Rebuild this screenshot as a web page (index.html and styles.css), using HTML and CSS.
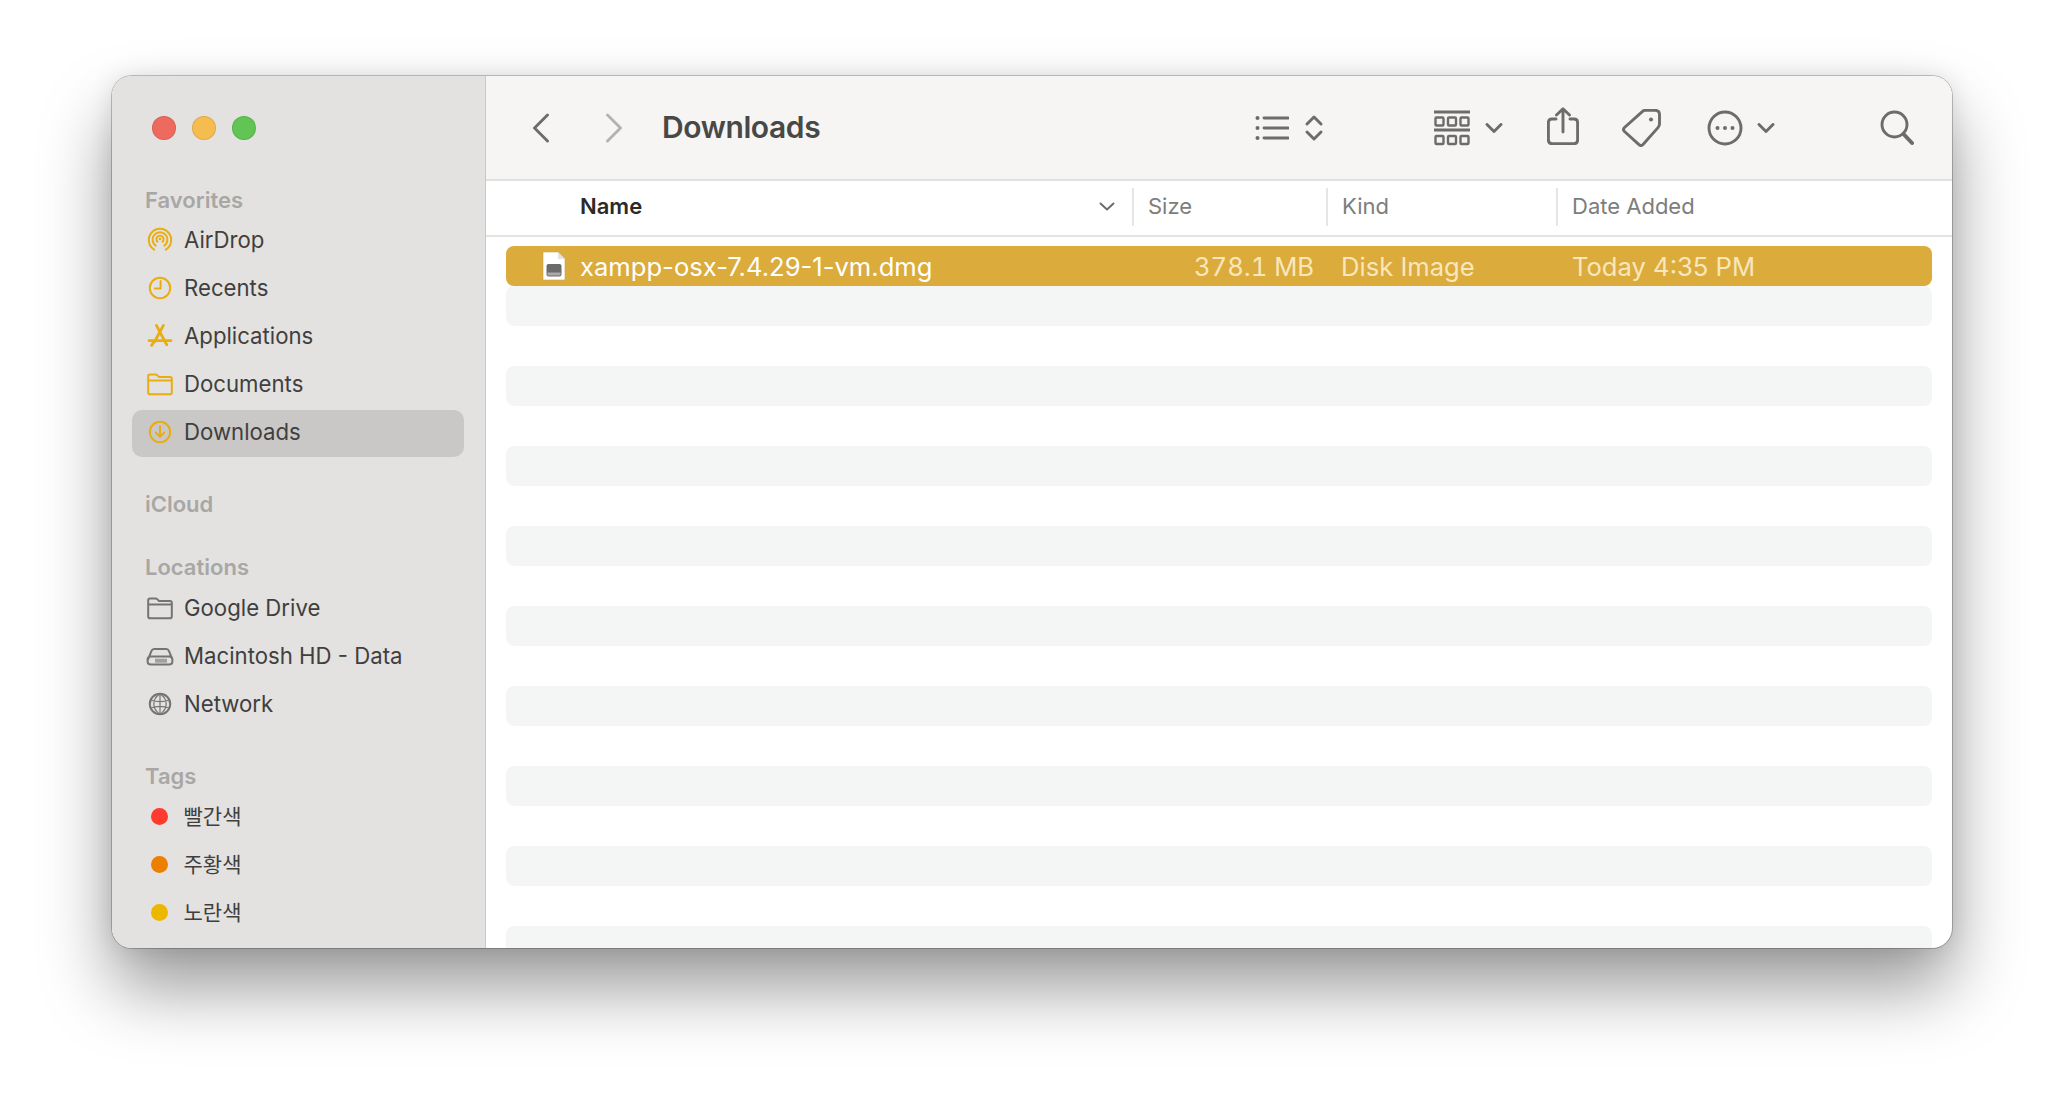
FILE: index.html
```html
<!DOCTYPE html>
<html lang="en">
<head>
<meta charset="utf-8">
<title>Downloads</title>
<link rel="stylesheet" href="styles.css">
</head>
<body>
<div class="window">
  <aside class="sidebar">
    <div class="lights"><span class="light red"></span><span class="light yellow"></span><span class="light green"></span></div>
    <div class="head">Favorites</div>
    <div class="item first"><svg class="ic amber" viewBox="0 0 28 28"><path d="M8.2 23.6a11.2 11.2 0 1 1 11.6 0"/><path d="M9.6 19.6a7.4 7.4 0 1 1 8.8 0"/><path d="M11.400 15.800a3.600 3.600 0 1 1 5.200 0"/><circle class="fill" cx="14" cy="13" r="1.300"/></svg><span>AirDrop</span></div>
    <div class="item"><svg class="ic amber" viewBox="0 0 28 28"><circle cx="14" cy="14" r="10.200"/><path d="M14.600 7v7.600H8.800"/></svg><span>Recents</span></div>
    <div class="item"><svg class="ic amber" viewBox="0 0 28 28"><path d="M10.400 3.400l10.400 19.400M17.400 3.400L8.400 20M3 18.600h22" stroke-width="2.800"/><path d="M5.600 23.400l1.600-2.400" stroke-width="2.800"/></svg><span>Applications</span></div>
    <div class="item"><svg class="ic amber" viewBox="0 0 28 28"><path d="M2.200 8.600V6.400q0-1.800 1.800-1.800h5.600q1 0 1.800.8l1.600 1.600h11q1.800 0 1.800 1.800v13.600q0 1.800-1.800 1.800H4q-1.800 0-1.800-1.800zM2.200 10.400h23.800"/></svg><span>Documents</span></div>
    <div class="item selected"><svg class="ic amber" viewBox="0 0 28 28"><circle cx="14" cy="14" r="10.200"/><path d="M14 8.200v10.600M9.800 14.600l4.200 4.200 4.200-4.200"/></svg><span>Downloads</span></div>
    <div class="head gap-a">iCloud</div>
    <div class="head gap-c">Locations</div>
    <div class="item"><svg class="ic grey" viewBox="0 0 28 28"><path d="M2.200 8.600V6.400q0-1.800 1.800-1.800h5.600q1 0 1.800.8l1.600 1.600h11q1.800 0 1.800 1.800v13.600q0 1.800-1.800 1.800H4q-1.800 0-1.800-1.800zM2.200 10.400h23.800"/></svg><span>Google Drive</span></div>
    <div class="item"><svg class="ic grey" viewBox="0 0 28 28"><path d="M2 17.500l3.400-8.400q.8-2 2.800-2h12q2 0 2.800 2l3.400 8.400M4.800 14.600h18.400q3.200 0 3.200 3v2q0 3-3.200 3H4.800q-3.200 0-3.200-3v-2q0-3 3.200-3z"/><path class="thin" d="M10 17.200v3M12 17.200v3M14 17.200v3M16 17.200v3M18 17.200v3M20 17.200v3"/></svg><span>Macintosh HD - Data</span></div>
    <div class="item"><svg class="ic grey" viewBox="0 0 28 28"><circle cx="14" cy="14" r="10.200"/><path class="thin" d="M14 3.800c-4.600 3-6.200 6.400-6.200 10.200s1.600 7.200 6.200 10.200M14 3.800c4.600 3 6.200 6.400 6.200 10.200s-1.600 7.200-6.200 10.200M14 3.800v20.400M4.600 10c5.500 2 13.300 2 18.800 0M4.600 18c5.500-2 13.300-2 18.800 0"/></svg><span>Network</span></div>
    <div class="head gap-b">Tags</div>
    <div class="item ko"><i class="dot d-red"></i><span>빨간색</span></div>
    <div class="item ko"><i class="dot d-orange"></i><span>주황색</span></div>
    <div class="item ko"><i class="dot d-yellow"></i><span>노란색</span></div>
  </aside>
  <main class="main">
    <header class="toolbar">
      <svg class="tb m-back" width="18" height="30" viewBox="0 0 18 30"><path d="M15.500 2L2.500 15l13 13"/></svg>
      <svg class="tb off m-fwd" width="18" height="30" viewBox="0 0 18 30"><path d="M2.500 2l13 13-13 13"/></svg>
      <h1 class="title">Downloads</h1>
      <svg class="tb m-list" width="34" height="26" viewBox="0 0 34 26"><path d="M9 3h24M9 13h24M9 23h24"/><circle class="fill" cx="2.500" cy="3" r="2"/><circle class="fill" cx="2.500" cy="13" r="2"/><circle class="fill" cx="2.500" cy="23" r="2"/></svg>
      <svg class="tb m-sort" width="18" height="28" viewBox="0 0 18 28"><path d="M2 10l7-7 7 7M2 18l7 7 7-7"/></svg>
      <svg class="tb m-group" width="36" height="36" viewBox="0 0 36 36"><path d="M0 2h36M0 20h36"/><g class="thinner"><rect x="1.500" y="7.500" width="8" height="8" rx="1"/><rect x="14" y="7.500" width="8" height="8" rx="1"/><rect x="26.500" y="7.500" width="8" height="8" rx="1"/><rect x="1.500" y="26" width="8" height="8" rx="1"/><rect x="14" y="26" width="8" height="8" rx="1"/><rect x="26.500" y="26" width="8" height="8" rx="1"/></g></svg>
      <svg class="tb m-chev1" width="18" height="10" viewBox="0 0 18 10"><path d="M2 1.500l7 7 7-7"/></svg>
      <svg class="tb m-share" width="32" height="38" viewBox="0 0 32 38"><path d="M9 12H5q-3.600 0-3.600 3.600V33q0 3.600 3.600 3.600h22q3.600 0 3.600-3.600V15.600q0-3.600-3.600-3.600h-4M16 25V2M9.500 8L16 1.700 22.500 8"/></svg>
      <svg class="tb m-tag" width="40" height="38" viewBox="0 0 40 38"><path d="M2.500 18.500L20 2.800Q21.600 1.300 23.500 1.300H33Q37.500 1.300 37.500 5.800V15Q37.500 17 36 18.600L21 35.500Q19 37.500 17 35.700L2.500 22.500Q.5 20.500 2.500 18.500Z"/><circle class="fill" cx="29" cy="10.500" r="2"/></svg>
      <svg class="tb m-more" width="36" height="36" viewBox="0 0 36 36"><circle cx="18" cy="18" r="16"/><circle class="fill" cx="10.500" cy="18" r="2"/><circle class="fill" cx="18" cy="18" r="2"/><circle class="fill" cx="25.500" cy="18" r="2"/></svg>
      <svg class="tb m-chev2" width="18" height="10" viewBox="0 0 18 10"><path d="M2 1.500l7 7 7-7"/></svg>
      <svg class="tb m-search" width="34" height="36" viewBox="0 0 34 36"><circle cx="14.500" cy="14.500" r="12.500"/><path class="thick" d="M23.500 24L32 33"/></svg>
    </header>
    <div class="colhead">
      <div class="col c-name"><b>Name</b><svg class="sort" width="16" height="9" viewBox="0 0 16 9"><path d="M1.500 1.500L8 7.500l6.500-6"/></svg></div>
      <div class="col c-size">Size</div>
      <div class="col c-kind">Kind</div>
      <div class="col c-date">Date Added</div>
    </div>
    <div class="list">
      <div class="row sel">
        <div class="c-file">
          <svg width="24" height="30" viewBox="0 0 24 30"><path class="page" d="M1 1h15l7 7v21H1z"/><path class="fold" d="M16 1v7h7z"/><rect class="disk" x="4.500" y="13" width="15" height="12.500" rx="2"/><rect class="disk2" x="5.500" y="21.500" width="13" height="3"/></svg>
          <span>xampp-osx-7.4.29-1-vm.dmg</span>
        </div>
        <div class="v-size">378.1 MB</div>
        <div class="v-kind">Disk Image</div>
        <div class="v-date">Today 4:35 PM</div>
      </div>
      <div class="row alt"></div><div class="row"></div>
      <div class="row alt"></div><div class="row"></div>
      <div class="row alt"></div><div class="row"></div>
      <div class="row alt"></div><div class="row"></div>
      <div class="row alt"></div><div class="row"></div>
      <div class="row alt"></div><div class="row"></div>
      <div class="row alt"></div><div class="row"></div>
      <div class="row alt"></div><div class="row"></div>
      <div class="row alt"></div>
    </div>
  </main>
</div>
</body>
</html>
```

FILE: styles.css
```css
* { box-sizing: border-box; }
html, body { margin: 0; height: 100%; background: #fff; overflow: hidden; }
body { padding: 76px 0 0 112px; font-family: Inter, "Noto Sans CJK KR", sans-serif; }

.window {
  display: flex;
  width: 1840px;
  height: 872px;
  border-radius: 20px;
  overflow: hidden;
  background: #fff;
  box-shadow: 0 0 0 1px rgba(0,0,0,.22), 0 0 24px rgba(0,0,0,.1), 0 40px 70px rgba(0,0,0,.4);
}

/* sidebar */
.sidebar {
  flex: 0 0 374px;
  padding: 0 21px 0 20px;
  background: #e3e2e0;
  border-right: 1px solid #c9c8c6;
  overflow: hidden;
}
.lights { display: flex; gap: 16px; height: 108px; padding: 40px 0 0 20px; }
.light { width: 24px; height: 24px; border-radius: 50%; box-shadow: inset 0 0 0 1px rgba(0,0,0,.1); }
.red { background: #ee6a5f; }
.yellow { background: #f5bd4f; }
.green { background: #61c454; }

.head { display: flex; align-items: center; height: 32px; padding-left: 13px; font-size: 22px; font-weight: 600; color: #a8a7a5; }
.gap-a { margin-top: 31px; }
.gap-c { margin-top: 31px; }
.gap-b { margin-top: 33px; }

.item {
  display: flex;
  align-items: center;
  gap: 10px;
  height: 47px;
  margin-top: 1px;
  padding-left: 14px;
  font-size: 22.200px;
  color: #403f3e;
  border-radius: 10px;
}
.item.first { margin-top: 0; }
.item.selected { margin-top: 3px; padding-bottom: 4px; background: #c9c8c6; }
.ko { font-size: 21px; }
.ko span { margin-bottom: 4px; }
.ic { flex: none; width: 28px; height: 28px; fill: none; stroke-width: 2; stroke-linecap: round; stroke-linejoin: round; }
.amber { stroke: #e8ad13; }
.amber .fill { fill: #e8ad13; stroke: none; }
.grey { stroke: #757472; }
.thin { stroke-width: 1.200; }
.dot { flex: none; width: 17px; height: 17px; margin: 0 5.500px 0 5px; border-radius: 50%; }
.d-red { background: #ff3b30; }
.d-orange { background: #ec7f00; }
.d-yellow { background: #ecb700; }

/* main */
.main { flex: 1; display: flex; flex-direction: column; min-width: 0; }
.toolbar {
  flex: 0 0 105px;
  display: flex;
  align-items: center;
  background: #f6f5f3;
  border-bottom: 2px solid #e2e1df;
}
.tb { flex: none; fill: none; stroke: #6d6c6a; stroke-width: 2.900; stroke-linecap: round; stroke-linejoin: round; }
.tb .fill { fill: #6d6c6a; stroke: none; }
.tb .thinner { stroke-width: 2.400; }
.tb .thick { stroke-width: 4; }
.tb.off { stroke: #b4b3b1; }
.title { flex: 1; margin: 0 0 2px 39px; font-size: 30px; font-weight: 600; color: #484847; letter-spacing: -.4px; }
.m-back { margin-left: 46px; }
.m-fwd { margin-left: 55px; }
.m-sort { margin-left: 16px; }
.m-group { margin-left: 111px; }
.m-chev1 { margin-left: 15px; }
.m-share { margin: 0 0 4px 44px; }
.m-tag { margin-left: 43px; }
.m-more { margin-left: 45px; }
.m-chev2 { margin-left: 14px; }
.m-search { margin: 0 38px 0 105px; }

.colhead {
  flex: 0 0 55px;
  display: grid;
  grid-template-columns: 646px 194px 230px 1fr;
  align-items: center;
  padding: 7px 0 9px;
  border-bottom: 2px solid #e4e4e3;
  font-size: 22px;
  color: #7d7d7c;
}
.col { display: flex; align-items: center; height: 38px; padding: 0 0 2px 14px; border-left: 2px solid #e6e6e5; }
.c-name { justify-content: space-between; padding: 0 17px 2px 94px; border-left: 0; color: #2a2a2a; }
.c-name b { font-weight: 600; }
.sort { fill: none; stroke: #6d6c6a; stroke-width: 2; stroke-linecap: round; stroke-linejoin: round; }

.list { flex: 1; padding: 9px 20px 0; overflow: hidden; }
.row { height: 40px; border-radius: 8px; }
.alt { background: #f4f5f5; }
.sel {
  display: grid;
  grid-template-columns: 617px 205px 230px 1fr;
  align-items: center;
  background: #dbab3c;
  font-size: 25.600px;
  color: #f8e7bd;
}
.c-file { display: flex; align-items: center; gap: 14px; padding-left: 36px; color: #fff; }
.c-file svg { flex: none; }
.v-size { text-align: right; padding-right: 14px; white-space: nowrap; font-variant-numeric: tabular-nums; }
.v-kind { padding-left: 13px; }
.v-date { padding-left: 14px; }
.page { fill: #fff; stroke: #c9a24a; stroke-width: .6; }
.fold { fill: #e3e3e3; }
.disk { fill: #6a6b6b; }
.disk2 { fill: #a9aaaa; }
```
